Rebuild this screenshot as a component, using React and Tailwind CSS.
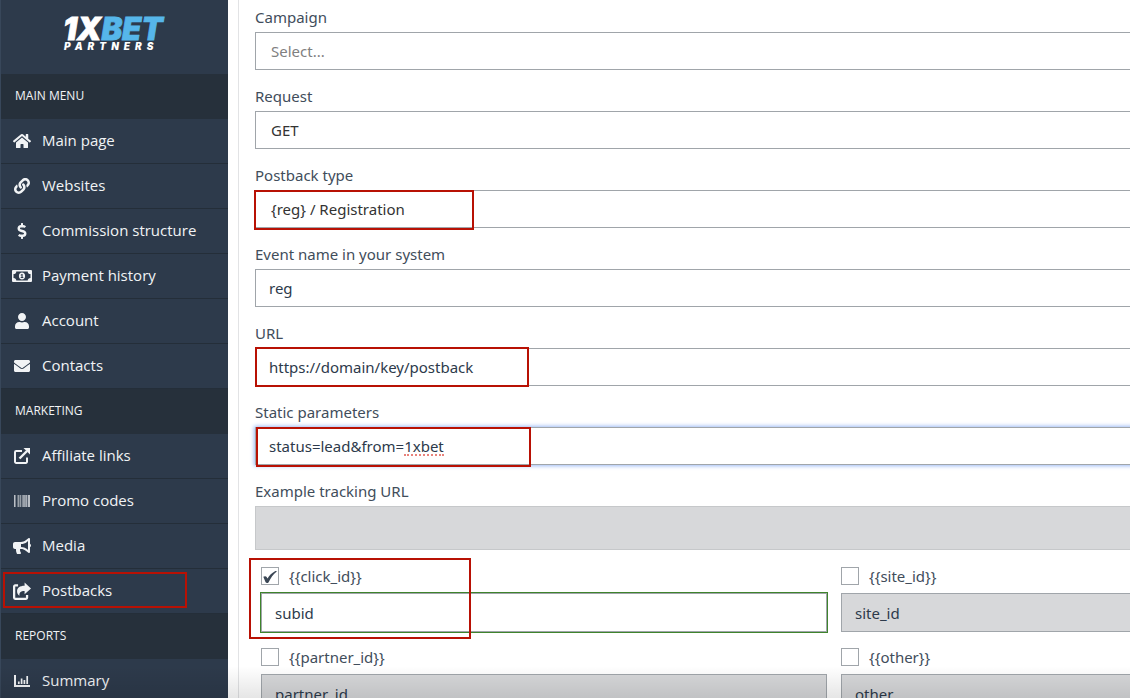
import React, { useState } from "react";
import clsx from "clsx";
import {
  FaBarcode,
  FaBullhorn,
  FaDollarSign,
  FaEnvelope,
  FaHome,
  FaLink,
  FaUser,
} from "react-icons/fa";

const ExternalIcon = (props) => (
  <svg viewBox="0 0 16 16" fill="none" stroke="currentColor" strokeWidth="2" {...props}>
    <path d="M8 3H2.200a1.200 1.200 0 0 0-1.200 1.200v9.600A1.200 1.200 0 0 0 2.200 15h9.600a1.200 1.200 0 0 0 1.200-1.200V9.500" />
    <path d="M5.500 10.500 13 3" strokeWidth="2.400" />
    <path d="M9.500 0H16v6.500z" fill="currentColor" stroke="none" />
  </svg>
);

const ShareIcon = (props) => (
  <svg viewBox="0 0 16 16" fill="none" stroke="currentColor" strokeWidth="2" {...props}>
    <path d="M4.500 3H1.900a.9.9 0 0 0-.9.9v10.200c0 .5.4.9.9.9h9.700a.9.9 0 0 0 .9-.9V11.500" />
    <path
      d="M10.300.4v2.900C6 3.400 3.600 5 3.600 8.300c0 1.700.9 3.200 2.200 4-.5-2.700.9-4.200 4.500-4.300v2.900L16 5.700z"
      fill="currentColor"
      stroke="none"
    />
  </svg>
);

const ChartIcon = (props) => (
  <svg viewBox="0 0 16 16" fill="none" stroke="currentColor" {...props}>
    <path d="M1 2v11h15" strokeWidth="2" />
    <path d="M4.800 11V8.500M7.600 11V5.500M10.400 11V7M13.200 11V3" strokeWidth="1.700" />
  </svg>
);

const MoneyIcon = (props) => (
  <svg viewBox="0 0 20 20" fill="currentColor" {...props}>
    <path
      fillRule="evenodd"
      d="M1 4h18a1 1 0 0 1 1 1v10a1 1 0 0 1-1 1H1a1 1 0 0 1-1-1V5a1 1 0 0 1 1-1zm3.300 1.500A2.800 2.800 0 0 1 1.500 8.100v3.800a2.800 2.800 0 0 1 2.800 2.600h11.400a2.800 2.800 0 0 1 2.800-2.600V8.100a2.800 2.800 0 0 1-2.800-2.600z"
    />
    <path
      fillRule="evenodd"
      d="M10 6.500c1.900 0 3.100 1.500 3.100 3.500s-1.200 3.500-3.100 3.500S6.900 12 6.900 10 8.100 6.500 10 6.500zM9.800 8 8.500 8.900l.4.700.6-.3V11h-.8v1h2.600v-1h-.7V8z"
    />
  </svg>
);

const MENU = [
  {
    title: "MAIN MENU",
    items: [
      { label: "Main page", icon: FaHome, size: "size-[18px]" },
      { label: "Websites", icon: FaLink },
      { label: "Commission structure", icon: FaDollarSign },
      { label: "Payment history", icon: MoneyIcon, size: "size-5" },
      { label: "Account", icon: FaUser },
      { label: "Contacts", icon: FaEnvelope },
    ],
  },
  {
    title: "MARKETING",
    items: [
      { label: "Affiliate links", icon: ExternalIcon },
      { label: "Promo codes", icon: FaBarcode },
      { label: "Media", icon: FaBullhorn, size: "size-[18px]" },
      { label: "Postbacks", icon: ShareIcon, size: "size-[18px]", marked: true },
    ],
  },
  {
    title: "REPORTS",
    items: [{ label: "Summary", icon: ChartIcon }],
  },
];

const PARAMS = [
  { name: "click_id", value: "subid", checked: true },
  { name: "site_id", value: "site_id" },
  { name: "partner_id", value: "partner_id" },
  { name: "other", value: "other" },
];

const Marker = ({ className }) => (
  <span
    className={clsx("pointer-events-none absolute border-2 border-[#b81104]", className)}
  />
);

const Logo = () => (
  <a href="#" aria-label="1xBet Partners" className="flex h-[74px] justify-center">
    <svg viewBox="0 0 112 64" className="h-16 w-28 font-[Inter,sans-serif] font-black italic">
      <text x="4" y="40" fontSize="31" fill="#ffffff" stroke="#ffffff" strokeWidth="0.800">
        1X
        <tspan fill="#56b6ea" stroke="#56b6ea">
          BET
        </tspan>
      </text>
      <text x="5" y="50" fontSize="10" letterSpacing="5" fill="#ffffff">
        PARTNERS
      </text>
    </svg>
  </a>
);

const Sidebar = () => (
  <aside className="w-[228px] shrink-0 border-l border-[#38475a] bg-[#2d3a4b] font-['Open_Sans',sans-serif]">
    <Logo />
    <nav>
      {MENU.map((group) => (
        <section key={group.title}>
          <h2 className="flex h-[45px] items-center bg-[#26303b] px-3.5 pb-0.5 text-xs text-[#f1f3f5]">
            {group.title}
          </h2>
          <ul>
            {group.items.map(({ label, icon: Icon, size = "size-4", marked }) => (
              <li key={label} className="relative h-[45px] border-b border-[#242e39]">
                <a
                  href="#"
                  className="flex h-full items-center pb-0.5 pl-[11px] text-[15px] text-[#f1f3f5]"
                >
                  <span className="mr-[10px] flex w-5 justify-center pt-0.5">
                    <Icon className={clsx("shrink-0", size)} />
                  </span>
                  {label}
                </a>
                {marked && <Marker className="top-[3px] left-[2px] h-9 w-[184px]" />}
              </li>
            ))}
          </ul>
        </section>
      ))}
    </nav>
  </aside>
);

const Field = ({ id, label, children }) => (
  <div className="mb-3.5">
    <label htmlFor={id} className="mb-[3px] block leading-6">
      {label}
    </label>
    <div className="relative">{children}</div>
  </div>
);

const control = "block h-[38px] w-full appearance-none border border-[#a0a5aa] bg-white outline-none";

const SelectField = ({ id, label, options, muted, children }) => (
  <Field id={id} label={label}>
    <select
      id={id}
      className={clsx(control, "px-[15px]", muted ? "text-[#808080]" : "text-[#333333]")}
    >
      {options.map((option) => (
        <option key={option}>{option}</option>
      ))}
    </select>
    {children}
  </Field>
);

const TextField = ({ id, label, value, focused, children }) => (
  <Field id={id} label={label}>
    <input
      id={id}
      type="text"
      defaultValue={value}
      spellCheck={false}
      className={clsx(
        control,
        "px-[13px] text-[#2d3a4b]",
        focused && "shadow-[0_0_4px_1px_#9dbbf5]"
      )}
    />
    {children}
  </Field>
);

const Param = ({ name, value, checked }) => {
  const [enabled, setEnabled] = useState(Boolean(checked));

  return (
    <div className="relative">
      <div className="mb-[5px] flex h-6 items-center gap-2.5">
        <span className="relative size-[18px]">
          <input
            id={`use-${name}`}
            type="checkbox"
            checked={enabled}
            onChange={(e) => setEnabled(e.target.checked)}
            className="block size-[18px] appearance-none border border-[#a0a5aa] bg-white"
          />
          {enabled && (
            <svg viewBox="0 0 18 18" className="pointer-events-none absolute inset-0 size-[18px] fill-[#3b4755]">
              <path d="M2.300 9.800c1.300-.9 2.900-.7 3.500.4l.7 1.200C8.400 8.400 10.800 5.900 14 4.200c.7-.3 1.400-.2 1.800.2-3.700 3-6 6.300-8.200 10.800-.5 1.100-2.500 1.100-3 .1z" />
            </svg>
          )}
        </span>
        <label htmlFor={`use-${name}`}>{`{{${name}}}`}</label>
      </div>
      <input
        type="text"
        aria-label={name}
        defaultValue={value}
        disabled={!enabled}
        spellCheck={false}
        className="block h-[39px] w-full border border-[#a0a5aa] bg-white px-[13px] text-[#2d3a4b] outline-none enabled:ring-1 enabled:ring-[#3f842c] disabled:bg-[#d7d8da]"
      />
      {checked && <Marker className="-top-1.5 -left-3 h-[81px] w-[222px]" />}
    </div>
  );
};

const App = () => (
  <div className="relative flex h-screen overflow-hidden bg-white font-['Noto_Sans',sans-serif] text-[15px] text-[#414d5b]">
    <Sidebar />
    <main className="ml-[10px] min-w-0 flex-1 overflow-hidden border-l border-[#e2e3e5] pt-[5px] pl-4">
      <form className="min-w-[1158px]">
        <SelectField id="campaign" label="Campaign" options={["Select..."]} muted />
        <SelectField id="request" label="Request" options={["GET", "POST"]} />
        <SelectField id="type" label="Postback type" options={["{reg} / Registration"]}>
          <Marker className="top-0 -left-px h-10 w-[220px]" />
        </SelectField>
        <TextField id="event" label="Event name in your system" value="reg" />
        <TextField id="url" label="URL" value="https://domain/key/postback">
          <Marker className="-top-px left-0 h-10 w-[274px]" />
        </TextField>
        <TextField id="static" label="Static parameters" value="status=lead&from=1xbet" focused>
          <Marker className="top-0 left-px h-10 w-[275px]" />
          <span className="pointer-events-none absolute top-[27px] left-[149px] w-10 border-b-2 border-dotted border-[#e8837c]" />
        </TextField>
        <Field id="example" label="Example tracking URL">
          <input
            id="example"
            type="text"
            disabled
            className="block h-11 w-full border border-[#c6c8ca] bg-[#d7d8da]"
          />
        </Field>
        <div className="grid grid-cols-2 gap-x-3.5 gap-y-[13px] px-1.5">
          {PARAMS.map((param) => (
            <Param key={param.name} {...param} />
          ))}
        </div>
      </form>
    </main>
    <div className="pointer-events-none absolute inset-x-0 bottom-0 h-8 bg-linear-to-b from-transparent to-black/10" />
  </div>
);

export default App;
